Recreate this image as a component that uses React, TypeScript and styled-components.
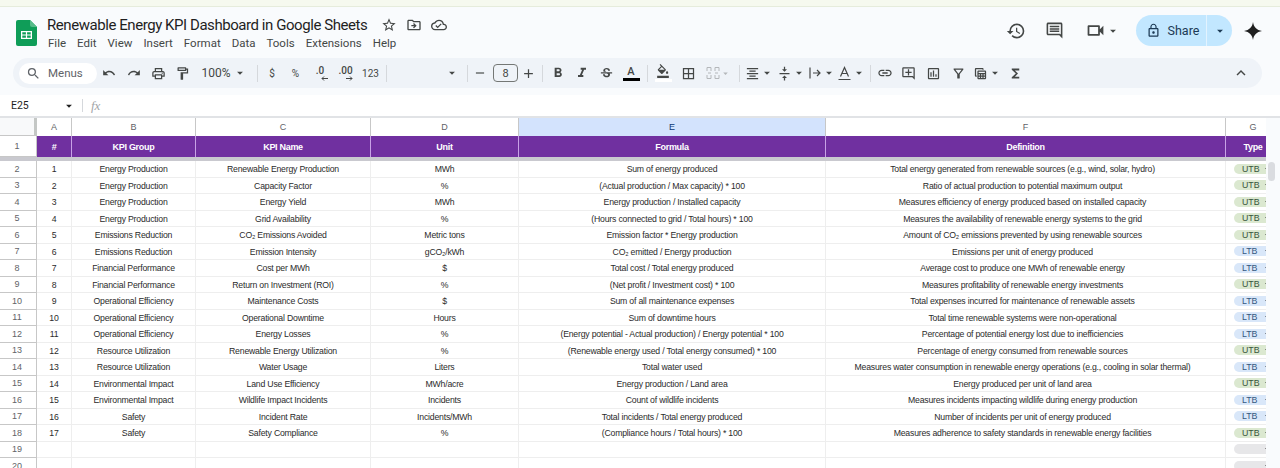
import styled, { createGlobalStyle } from 'styled-components'
import {
  MdArrowDropDown,
  MdBorderAll,
  MdFormatAlignCenter,
  MdFormatBold,
  MdFormatItalic,
  MdHistory,
  MdKeyboardArrowUp,
  MdLink,
  MdLockOutline,
  MdOutlineAddComment,
  MdOutlineCloudDone,
  MdOutlineComment,
  MdOutlineDriveFileMove,
  MdOutlineFilterAlt,
  MdOutlineFormatColorFill,
  MdOutlineFormatPaint,
  MdOutlineFunctions,
  MdOutlineInsertChart,
  MdOutlinePrint,
  MdOutlineStarBorder,
  MdOutlineTableView,
  MdOutlineVideocam,
  MdRedo,
  MdSearch,
  MdStrikethroughS,
  MdUndo,
  MdVerticalAlignCenter,
  MdAdd,
  MdRemove,
} from 'react-icons/md'

const GlobalStyle = createGlobalStyle`
  html, body {
    margin: 0;
    padding: 0;
    background: #f9fbfd;
  }
  body {
    font-family: Roboto, "Liberation Sans", sans-serif;
  }
`

const Page = styled.div`
  width: 1280px;
  height: 468px;
  overflow: hidden;
  display: flex;
  flex-direction: column;
  background: #f9fbfd;
  color: #444746;
`

const TopStrip = styled.div`
  height: 6px;
  background: #f6f9ef;
  border-bottom: 1px solid #e6ecdc;
`

const Header = styled.header`
  height: 51px;
  display: flex;
  align-items: flex-start;
  padding-left: 16px;
`

const LogoWrap = styled.div`
  width: 21px;
  height: 26px;
  margin-top: 13px;
  margin-right: 10px;
`

const TitleBlock = styled.div`
  display: flex;
  flex-direction: column;
  margin-top: 7px;
`

const TitleRow = styled.div`
  display: flex;
  align-items: center;
  height: 21px;
`

const Title = styled.h1`
  margin: 0 9px 0 0;
  font-size: 15px;
  letter-spacing: -0.44px;
  font-weight: 400;
  color: #1f1f1f;
  white-space: nowrap;
`

const TitleIcon = styled.span`
  width: 25px;
  display: flex;
  justify-content: center;
  color: #444746;
`

const MenuBar = styled.nav`
  display: flex;
  gap: 11px;
  margin-top: 1px;
  padding-left: 1px;
  font-size: 11.5px;
  line-height: 15px;
  color: #444746;
`

const HeaderActions = styled.div`
  margin-left: auto;
  display: flex;
  align-items: center;
  height: 31px;
  margin-top: 8px;
  padding-right: 6px;
`

const ActionIcon = styled.span<{ $w: number }>`
  width: ${(p) => p.$w}px;
  display: flex;
  align-items: center;
  justify-content: center;
  color: #444746;
`

const ShareButton = styled.div`
  margin-left: 4px;
  width: 96px;
  height: 31px;
  display: flex;
  border-radius: 16px;
  overflow: hidden;
  background: #c2e7ff;
  color: #1c3a55;
  font-size: 12.5px;
  font-weight: 400;
`

const ShareMain = styled.div`
  flex: 1;
  display: flex;
  align-items: center;
  justify-content: center;
  gap: 7px;
  padding-left: 3px;
  border-right: 1px solid #e3f3ff;
`

const ShareCaret = styled.div`
  width: 25px;
  display: flex;
  align-items: center;
  justify-content: center;
`

const Toolbar = styled.div`
  height: 30px;
  margin: 0 18px 0 13px;
  padding: 0 9px 0 6px;
  display: flex;
  align-items: center;
  background: #eff3f8;
  border-radius: 15px;
`

const SearchPill = styled.div`
  width: 78px;
  height: 21px;
  display: flex;
  align-items: center;
  gap: 7px;
  padding-left: 7px;
  box-sizing: border-box;
  background: #fff;
  border-radius: 11px;
  font-size: 11.5px;
  color: #5f6368;
`

const Tool = styled.div<{ $w: number; $muted?: boolean }>`
  width: ${(p) => p.$w}px;
  height: 22px;
  flex: none;
  display: flex;
  align-items: center;
  justify-content: center;
  color: ${(p) => (p.$muted ? '#b4b7ba' : '#444746')};
  font-size: 11px;
`

const FontPicker = styled.div`
  width: 73px;
  height: 22px;
  flex: none;
  box-sizing: border-box;
  padding-right: 4px;
  display: flex;
  align-items: center;
  justify-content: flex-end;
`

const Spacer = styled.div`
  flex: 1;
`

const ZoomText = styled.span`
  font-size: 12px;
  margin-right: 2px;
`

const Sep = styled.div`
  width: 1px;
  height: 17px;
  margin: 0 3.5px;
  flex: none;
  background: #d5d8dc;
`

const DecimalTool = styled.span`
  position: relative;
  font-size: 10px;
  font-weight: 500;
  line-height: 10px;
  top: -2px;
`

const DecimalArrow = styled.svg<{ $side: 'left' | 'right' }>`
  position: absolute;
  top: 10px;
  ${(p) => (p.$side === 'left' ? 'right: -4px;' : 'right: 0;')}
`

const SmallLabel = styled.span`
  font-size: 10px;
`

const SizeBox = styled.div`
  width: 25px;
  height: 18px;
  margin-left: 4px;
  flex: none;
  box-sizing: border-box;
  display: flex;
  align-items: center;
  justify-content: center;
  border: 1px solid #747775;
  border-radius: 4px;
  font-size: 11px;
`

const TextColor = styled.div`
  display: flex;
  flex-direction: column;
  align-items: center;
  width: 17px;
  font-size: 11px;
  font-weight: 500;
  line-height: 11px;
`

const ColorBar = styled.span<{ $color: string }>`
  align-self: stretch;
  height: 3px;
  margin-top: 1px;
  background: ${(p) => p.$color};
`

const FillIcon = styled.div`
  display: flex;
  flex-direction: column;
  align-items: center;
  width: 17px;
`

const FormulaBar = styled.div`
  height: 21px;
  margin-top: 7px;
  display: flex;
  align-items: center;
  background: #fff;
  border-bottom: 2px solid #e1e3e6;
  font-size: 10.5px;
  color: #1f1f1f;
`

const CellRef = styled.div`
  width: 62px;
  box-sizing: border-box;
  padding-left: 11px;
`

const FormulaDivider = styled.div`
  width: 1px;
  height: 13px;
  margin: 0 8px 0 6px;
  background: #d5d8dc;
`

const Fx = styled.i`
  font-family: "Liberation Serif", serif;
  font-size: 13px;
  color: #a2a5a8;
`

const SheetArea = styled.div`
  flex: 1;
  display: flex;
  min-height: 0;
  background: #fff;
`

const Grid = styled.div`
  width: 1266px;
  overflow: hidden;
`

const Scrollbar = styled.div`
  flex: 1;
  position: relative;
  background: #f9fbfd;
`

const ScrollThumb = styled.div`
  position: absolute;
  top: 44px;
  left: 2px;
  width: 7px;
  height: 19px;
  border-radius: 4px;
  background: #dadce0;
`

const Row = styled.div<{ $h: number }>`
  display: grid;
  grid-template-columns: 37px 35px 124px 175px 148px 307px 400px 55px;
  width: 1281px;
  height: ${(p) => p.$h}px;
`

const RowNum = styled.div`
  display: flex;
  align-items: center;
  justify-content: center;
  padding-right: 2px;
  background: #fff;
  border-right: 1px solid #c7c7c7;
  border-bottom: 1px solid #c7c7c7;
  color: #5f6368;
  font: 9px "Liberation Sans", sans-serif;
`

const Corner = styled.div`
  background: #f8f9fa;
  border-right: 3px solid #c4c7c5;
  border-bottom: 1px solid #c7c7c7;
`

const ColHead = styled.div<{ $active?: boolean }>`
  display: flex;
  align-items: center;
  justify-content: center;
  background: ${(p) => (p.$active ? '#d3e3fd' : '#fff')};
  border-right: 1px solid #c7c7c7;
  color: ${(p) => (p.$active ? '#0b3a75' : '#5f6368')};
  font: 9px "Liberation Sans", sans-serif;
`

const HeadCell = styled.div`
  display: flex;
  align-items: center;
  justify-content: center;
  background: #7030a0;
  border-right: 1px solid #c8a2e6;
  color: #fff;
  font: bold 9px "Liberation Sans", sans-serif;
  letter-spacing: -0.3px;
`

const FreezeLine = styled.div`
  height: 4px;
  background: #c9c9cf;
`

const Cell = styled.div<{ $inset?: number }>`
  min-width: 0;
  display: flex;
  align-items: center;
  justify-content: center;
  padding-top: 1px;
  padding-right: ${(p) => p.$inset ?? 0}px;
  box-sizing: border-box;
  white-space: nowrap;
  border-right: 1px solid #eeeeee;
  border-bottom: 1px solid #eeeeee;
  color: #2b2b2b;
  font: 8.7px "Liberation Sans", sans-serif;
  letter-spacing: -0.2px;
`

const TypeCell = styled.div`
  display: flex;
  align-items: center;
  padding-left: 8px;
  border-bottom: 1px solid #eeeeee;
`

const tagColors = {
  UTB: { bg: '#dbe8d0', fg: '#37563a' },
  LTB: { bg: '#d9e7f9', fg: '#34587f' },
  '': { bg: '#e7e7e9', fg: '#444' },
}

const TypeTag = styled.div<{ $type: keyof typeof tagColors }>`
  width: 48px;
  height: 10px;
  display: flex;
  align-items: center;
  padding-left: 8px;
  box-sizing: border-box;
  gap: 6px;
  border-radius: 5px;
  background: ${(p) => tagColors[p.$type].bg};
  color: ${(p) => tagColors[p.$type].fg};
  font: 8.8px "Liberation Sans", sans-serif;
`

const TagLabel = styled.span`
  width: 17px;
`

const TagCaret = styled.span`
  width: 0;
  height: 0;
  border-left: 2px solid transparent;
  border-right: 2px solid transparent;
  border-top: 2px solid #333;
`

type Kpi = [string, string, string, string, string, 'UTB' | 'LTB']

const kpis: Kpi[] = [
  ['Energy Production', 'Renewable Energy Production', 'MWh', 'Sum of energy produced', 'Total energy generated from renewable sources (e.g., wind, solar, hydro)', 'UTB'],
  ['Energy Production', 'Capacity Factor', '%', '(Actual production / Max capacity) * 100', 'Ratio of actual production to potential maximum output', 'UTB'],
  ['Energy Production', 'Energy Yield', 'MWh', 'Energy production / Installed capacity', 'Measures efficiency of energy produced based on installed capacity', 'UTB'],
  ['Energy Production', 'Grid Availability', '%', '(Hours connected to grid / Total hours) * 100', 'Measures the availability of renewable energy systems to the grid', 'UTB'],
  ['Emissions Reduction', 'CO₂ Emissions Avoided', 'Metric tons', 'Emission factor * Energy production', 'Amount of CO₂ emissions prevented by using renewable sources', 'UTB'],
  ['Emissions Reduction', 'Emission Intensity', 'gCO₂/kWh', 'CO₂ emitted / Energy production', 'Emissions per unit of energy produced', 'LTB'],
  ['Financial Performance', 'Cost per MWh', '$', 'Total cost / Total energy produced', 'Average cost to produce one MWh of renewable energy', 'LTB'],
  ['Financial Performance', 'Return on Investment (ROI)', '%', '(Net profit / Investment cost) * 100', 'Measures profitability of renewable energy investments', 'UTB'],
  ['Operational Efficiency', 'Maintenance Costs', '$', 'Sum of all maintenance expenses', 'Total expenses incurred for maintenance of renewable assets', 'LTB'],
  ['Operational Efficiency', 'Operational Downtime', 'Hours', 'Sum of downtime hours', 'Total time renewable systems were non-operational', 'LTB'],
  ['Operational Efficiency', 'Energy Losses', '%', '(Energy potential - Actual production) / Energy potential * 100', 'Percentage of potential energy lost due to inefficiencies', 'LTB'],
  ['Resource Utilization', 'Renewable Energy Utilization', '%', '(Renewable energy used / Total energy consumed) * 100', 'Percentage of energy consumed from renewable sources', 'UTB'],
  ['Resource Utilization', 'Water Usage', 'Liters', 'Total water used', 'Measures water consumption in renewable energy operations (e.g., cooling in solar thermal)', 'LTB'],
  ['Environmental Impact', 'Land Use Efficiency', 'MWh/acre', 'Energy production / Land area', 'Energy produced per unit of land area', 'UTB'],
  ['Environmental Impact', 'Wildlife Impact Incidents', 'Incidents', 'Count of wildlife incidents', 'Measures incidents impacting wildlife during energy production', 'LTB'],
  ['Safety', 'Incident Rate', 'Incidents/MWh', 'Total incidents / Total energy produced', 'Number of incidents per unit of energy produced', 'LTB'],
  ['Safety', 'Safety Compliance', '%', '(Compliance hours / Total hours) * 100', 'Measures adherence to safety standards in renewable energy facilities', 'UTB'],
]

const menus = ['File', 'Edit', 'View', 'Insert', 'Format', 'Data', 'Tools', 'Extensions', 'Help']
const columns = ['A', 'B', 'C', 'D', 'E', 'F', 'G']
const headings = ['#', 'KPI Group', 'KPI Name', 'Unit', 'Formula', 'Definition', 'Type']

function SheetsLogo() {
  return (
    <svg width="21" height="26" viewBox="0 0 21 26">
      <path d="M2 0h12l7 7v17a2 2 0 0 1-2 2H2a2 2 0 0 1-2-2V2a2 2 0 0 1 2-2z" fill="#0f9d58" />
      <path d="M14 0l7 7h-5a2 2 0 0 1-2-2z" fill="#57bb8a" />
      <path d="M5 11h11v8H5z M6.3 12.2v2.2h3.6v-2.2z M11.1 12.2v2.2h3.6v-2.2z M6.3 15.6v2.2h3.6v-2.2z M11.1 15.6v2.2h3.6v-2.2z" fill="#fff" fillRule="evenodd" />
    </svg>
  )
}

function GeminiSpark() {
  return (
    <svg width="18" height="18" viewBox="0 0 18 18">
      <path d="M9 0c.7 5 3.6 8.2 9 9-5.4.8-8.3 4-9 9-.7-5-3.6-8.2-9-9 5.4-.8 8.3-4 9-9z" fill="#1f1f1f" />
    </svg>
  )
}

function MergeIcon() {
  return (
    <svg width="14" height="14" viewBox="0 0 14 14" fill="none" stroke="currentColor" strokeWidth="1">
      <path d="M1 5V1.5h4V5M9 5V1.5h4V5M1 9v3.5h4V9M9 9v3.5h4V9M5 7H2M9 7h3" />
    </svg>
  )
}

function WrapIcon() {
  return (
    <svg width="14" height="14" viewBox="0 0 14 14" fill="none" stroke="currentColor" strokeWidth="1.2">
      <path d="M2 1.5v11M5 7h7M9 4l3 3-3 3" />
    </svg>
  )
}

function RotateIcon() {
  return (
    <svg width="15" height="15" viewBox="0 0 15 15" fill="none" stroke="currentColor" strokeWidth="1.2">
      <path d="M3.5 10.5L7.5 1.5l4 9M5 7.5h5M1.5 13.5h12" />
    </svg>
  )
}

function Caret({ size = 14 }: { size?: number }) {
  return <MdArrowDropDown size={size} />
}

export default function App() {
  return (
    <Page>
      <GlobalStyle />
      <TopStrip />
      <Header>
        <LogoWrap>
          <SheetsLogo />
        </LogoWrap>
        <TitleBlock>
          <TitleRow>
            <Title>Renewable Energy KPI Dashboard in Google Sheets</Title>
            <TitleIcon>
              <MdOutlineStarBorder size={16} />
            </TitleIcon>
            <TitleIcon>
              <MdOutlineDriveFileMove size={16} />
            </TitleIcon>
            <TitleIcon>
              <MdOutlineCloudDone size={16} />
            </TitleIcon>
          </TitleRow>
          <MenuBar>
            {menus.map((menu) => (
              <span key={menu}>{menu}</span>
            ))}
          </MenuBar>
        </TitleBlock>
        <HeaderActions>
          <ActionIcon $w={38}>
            <MdHistory size={20} />
          </ActionIcon>
          <ActionIcon $w={38}>
            <MdOutlineComment size={19} />
          </ActionIcon>
          <ActionIcon $w={59}>
            <MdOutlineVideocam size={21} />
            <Caret />
          </ActionIcon>
          <ShareButton>
            <ShareMain>
              <MdLockOutline size={15} />
              Share
            </ShareMain>
            <ShareCaret>
              <Caret />
            </ShareCaret>
          </ShareButton>
          <ActionIcon $w={42}>
            <GeminiSpark />
          </ActionIcon>
        </HeaderActions>
      </Header>

      <Toolbar>
        <SearchPill>
          <MdSearch size={15} />
          Menus
        </SearchPill>
        <Tool $w={24}><MdUndo size={14} /></Tool>
        <Tool $w={25}><MdRedo size={14} /></Tool>
        <Tool $w={24}><MdOutlinePrint size={15} /></Tool>
        <Tool $w={25}><MdOutlineFormatPaint size={15} /></Tool>
        <Tool $w={58}><ZoomText>100%</ZoomText><Caret /></Tool>
        <Sep />
        <Tool $w={22}><SmallLabel>$</SmallLabel></Tool>
        <Tool $w={25}><SmallLabel>%</SmallLabel></Tool>
        <Tool $w={24}>
          <DecimalTool>
            .0
            <DecimalArrow $side="left" width="7" height="5" viewBox="0 0 7 5" fill="none" stroke="currentColor">
              <path d="M7 2.5H1M3 .5l-2 2 2 2" />
            </DecimalArrow>
          </DecimalTool>
        </Tool>
        <Tool $w={27}>
          <DecimalTool>
            .00
            <DecimalArrow $side="right" width="7" height="5" viewBox="0 0 7 5" fill="none" stroke="currentColor">
              <path d="M0 2.5h6M4 .5l2 2-2 2" />
            </DecimalArrow>
          </DecimalTool>
        </Tool>
        <Tool $w={23}><SmallLabel>123</SmallLabel></Tool>
        <Sep />
        <FontPicker><Caret /></FontPicker>
        <Sep />
        <Tool $w={18}><MdRemove size={14} /></Tool>
        <SizeBox>8</SizeBox>
        <Tool $w={20}><MdAdd size={15} /></Tool>
        <Sep />
        <Tool $w={23}><MdFormatBold size={16} /></Tool>
        <Tool $w={25}><MdFormatItalic size={16} /></Tool>
        <Tool $w={25}><MdStrikethroughS size={15} /></Tool>
        <Tool $w={24}>
          <TextColor>
            A
            <ColorBar $color="#000" />
          </TextColor>
        </Tool>
        <Sep />
        <Tool $w={24}>
          <FillIcon>
            <MdOutlineFormatColorFill size={14} />
            <ColorBar $color="#fff" />
          </FillIcon>
        </Tool>
        <Tool $w={27}><MdBorderAll size={15} /></Tool>
        <Tool $w={33} $muted><MergeIcon /><Caret size={11} /></Tool>
        <Sep />
        <Tool $w={32}><MdFormatAlignCenter size={15} /><Caret /></Tool>
        <Tool $w={32}><MdVerticalAlignCenter size={15} /><Caret /></Tool>
        <Tool $w={30}><WrapIcon /><Caret /></Tool>
        <Tool $w={29}><RotateIcon /><Caret /></Tool>
        <Sep />
        <Tool $w={22}><MdLink size={16} /></Tool>
        <Tool $w={25}><MdOutlineAddComment size={15} /></Tool>
        <Tool $w={25}><MdOutlineInsertChart size={15} /></Tool>
        <Tool $w={24}><MdOutlineFilterAlt size={15} /></Tool>
        <Tool $w={35}><MdOutlineTableView size={15} /><Caret /></Tool>
        <Tool $w={20}><MdOutlineFunctions size={15} /></Tool>
        <Spacer />
        <Tool $w={24}><MdKeyboardArrowUp size={18} /></Tool>
      </Toolbar>

      <FormulaBar>
        <CellRef>E25</CellRef>
        <Caret />
        <FormulaDivider />
        <Fx>fx</Fx>
      </FormulaBar>

      <SheetArea>
        <Grid>
          <Row $h={18}>
            <Corner />
            {columns.map((col) => (
              <ColHead key={col} $active={col === 'E'}>{col}</ColHead>
            ))}
          </Row>
          <Row $h={21}>
            <RowNum>1</RowNum>
            {headings.map((heading) => (
              <HeadCell key={heading}>{heading}</HeadCell>
            ))}
          </Row>
          <FreezeLine />
          {kpis.map((kpi, i) => (
            <Row $h={16.5} key={i}>
              <RowNum>{i + 2}</RowNum>
              <Cell>{i + 1}</Cell>
              {kpi.slice(0, 5).map((text, c) => (
                <Cell key={c} $inset={c === 4 ? 6 : 0}>{text}</Cell>
              ))}
              <TypeCell>
                <TypeTag $type={kpi[5]}>
                  <TagLabel>{kpi[5]}</TagLabel>
                  <TagCaret />
                </TypeTag>
              </TypeCell>
            </Row>
          ))}
          {[19, 20].map((n) => (
            <Row $h={16.5} key={n}>
              <RowNum>{n}</RowNum>
              <Cell />
              <Cell />
              <Cell />
              <Cell />
              <Cell />
              <Cell />
              <TypeCell>
                <TypeTag $type="">
                  <TagLabel />
                  <TagCaret />
                </TypeTag>
              </TypeCell>
            </Row>
          ))}
        </Grid>
        <Scrollbar>
          <ScrollThumb />
        </Scrollbar>
      </SheetArea>
    </Page>
  )
}
